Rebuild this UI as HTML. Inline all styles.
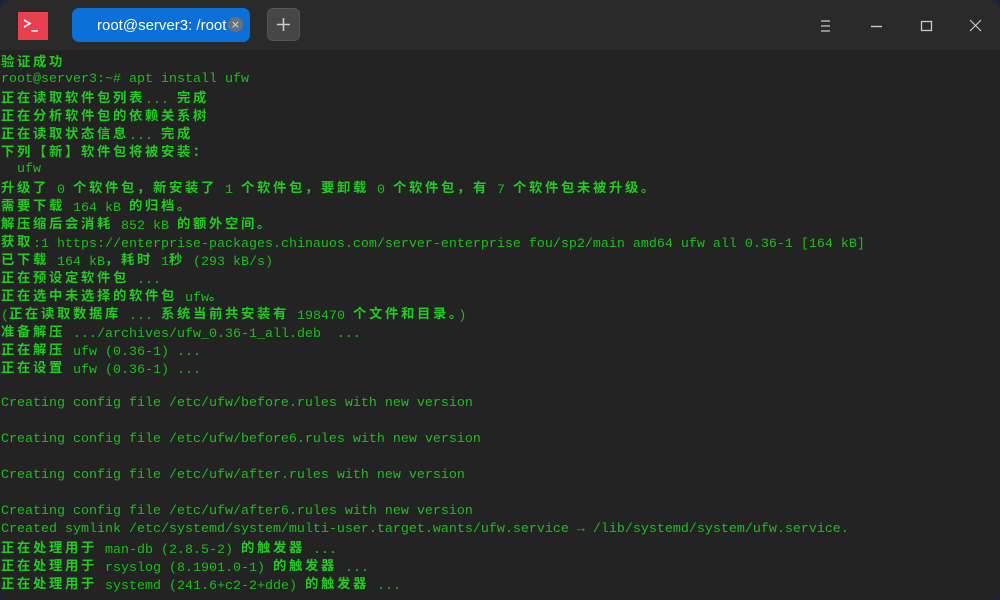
<!DOCTYPE html>
<html><head><meta charset="utf-8"><style>
html,body{margin:0;padding:0;width:1000px;height:600px;overflow:hidden;background:#1a2242;}
.win{position:absolute;left:0;top:0;width:1000px;height:600px;background:#232323;border-radius:10px;overflow:hidden;}
.tb{position:absolute;left:0;top:0;width:1000px;height:50px;background:#2a2a2a;}
.logo{position:absolute;left:18px;top:12px;width:30px;height:28px;background:#e8404e;}
.tab{position:absolute;left:72px;top:8px;width:178px;height:34px;background:#0a6fd6;border-radius:7px;color:#fff;font:15px "Liberation Sans",sans-serif;line-height:34px;}
.tab span{position:absolute;left:25px;top:1px;}
.tx{position:absolute;left:156px;top:9px;width:15px;height:15px;border-radius:50%;background:#6b6f76;color:#ddd;font:11px "DejaVu Sans",sans-serif;line-height:15px;text-align:center;}
.add{position:absolute;left:267px;top:8px;width:33px;height:33px;background:#464646;border:1px solid #555;border-radius:6px;box-sizing:border-box;}
.term{position:absolute;left:1px;top:51px;font:13.33px "Liberation Mono",monospace;color:#19c019;}
.term div{height:18px;line-height:18px;white-space:pre;overflow:visible;position:relative;top:2px;}
b{font-family:"Noto Sans CJK SC",sans-serif;font-weight:bold;letter-spacing:2.67px;color:#1fcc1f;font-size:13.33px;line-height:18px;position:relative;top:-1px;}
</style></head><body>
<div class="win">
<div class="tb">
 <div class="logo"><svg width="30" height="28"><path d="M6 8l6 3.5-6 3.5" stroke="#fff" stroke-width="1.6" fill="none"/><path d="M13 19h7" stroke="#fff" stroke-width="1.6"/></svg></div>
 <div class="tab"><span>root@server3: /root</span><div class="tx">×</div></div>
 <div class="add"><svg width="31" height="31"><path d="M15.5 9v13M9 15.5h13" stroke="#ccc" stroke-width="1.6"/></svg></div>
 <svg style="position:absolute;left:810px;top:15px" width="180" height="22">
  <path d="M11 6h9M11 11h9M11 16h9" stroke="#c8cad4" stroke-width="1.2"/>
  <path d="M61 11.5h11" stroke="#c8cad4" stroke-width="1.4"/>
  <rect x="111.5" y="6.5" width="10" height="9" stroke="#c8cad4" stroke-width="1.3" fill="none"/>
  <path d="M160 5l11 11M171 5l-11 11" stroke="#c8cad4" stroke-width="1.2"/>
 </svg>
</div>
<div class="term"><div><b>验证成功</b></div><div>root@server3:~# apt install ufw</div><div><b>正在读取软件包列表</b>... <b>完成</b></div><div><b>正在分析软件包的依赖关系树</b></div><div><b>正在读取状态信息</b>... <b>完成</b></div><div><b>下列【新】软件包将被安装：</b></div><div>  ufw</div><div><b>升级了</b> 0 <b>个软件包，新安装了</b> 1 <b>个软件包，要卸载</b> 0 <b>个软件包，有</b> 7 <b>个软件包未被升级。</b></div><div><b>需要下载</b> 164 kB <b>的归档。</b></div><div><b>解压缩后会消耗</b> 852 kB <b>的额外空间。</b></div><div><b>获取</b>:1 https://enterprise-packages.chinauos.com/server-enterprise fou/sp2/main amd64 ufw all 0.36-1 [164 kB]</div><div><b>已下载</b> 164 kB<b>，耗时</b> 1<b>秒</b> (293 kB/s)</div><div><b>正在预设定软件包</b> ...</div><div><b>正在选中未选择的软件包</b> ufw<b>。</b></div><div>(<b>正在读取数据库</b> ... <b>系统当前共安装有</b> 198470 <b>个文件和目录。</b>)</div><div><b>准备解压</b> .../archives/ufw_0.36-1_all.deb  ...</div><div><b>正在解压</b> ufw (0.36-1) ...</div><div><b>正在设置</b> ufw (0.36-1) ...</div><div></div><div>Creating config file /etc/ufw/before.rules with new version</div><div></div><div>Creating config file /etc/ufw/before6.rules with new version</div><div></div><div>Creating config file /etc/ufw/after.rules with new version</div><div></div><div>Creating config file /etc/ufw/after6.rules with new version</div><div>Created symlink /etc/systemd/system/multi-user.target.wants/ufw.service → /lib/systemd/system/ufw.service.</div><div><b>正在处理用于</b> man-db (2.8.5-2) <b>的触发器</b> ...</div><div><b>正在处理用于</b> rsyslog (8.1901.0-1) <b>的触发器</b> ...</div><div><b>正在处理用于</b> systemd (241.6+c2-2+dde) <b>的触发器</b> ...</div></div>
</div>
</body></html>
